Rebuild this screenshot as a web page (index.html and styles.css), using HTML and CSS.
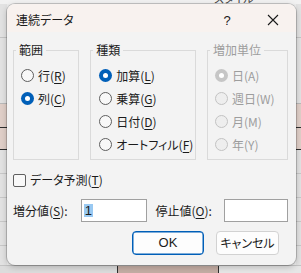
FILE: index.html
```html
<!DOCTYPE html>
<html lang="ja">
<head>
<meta charset="utf-8">
<title>連続データ</title>
<link rel="stylesheet" href="styles.css">
</head>
<body>
<div class="sheet">
  <div class="top"><span class="top-text">スタイル</span></div>
  <div class="left"></div>
  <div class="mid"></div>
  <div class="right"></div>
  <div class="bottom"><div class="b1"></div><div class="b2"></div><div class="b3"></div></div>
</div>

<div class="dialog">
  <div class="titlebar">
    <span class="title">連続データ</span>
    <span class="tb-btn help">?</span>
    <span class="tb-btn close">
      <svg width="12" height="12" viewBox="0 0 12 12"><path d="M1 1 L11 11 M11 1 L1 11" stroke="#1a1a1a" stroke-width="1.1" fill="none"/></svg>
    </span>
  </div>
  <div class="content">
    <div class="groups">
      <fieldset class="group g1">
        <legend>範囲</legend>
        <div class="opt"><span class="radio"></span><span>行(<u>R</u>)</span></div>
        <div class="opt"><span class="radio on"></span><span>列(<u>C</u>)</span></div>
      </fieldset>
      <fieldset class="group g2">
        <legend>種類</legend>
        <div class="opt"><span class="radio on"></span><span>加算(<u>L</u>)</span></div>
        <div class="opt"><span class="radio"></span><span>乗算(<u>G</u>)</span></div>
        <div class="opt"><span class="radio"></span><span>日付(<u>D</u>)</span></div>
        <div class="opt"><span class="radio"></span><span>オートフィル(<u>F</u>)</span></div>
      </fieldset>
      <fieldset class="group g3 disabled">
        <legend>増加単位</legend>
        <div class="opt"><span class="radio on"></span><span>日(A)</span></div>
        <div class="opt"><span class="radio"></span><span>週日(W)</span></div>
        <div class="opt"><span class="radio"></span><span>月(M)</span></div>
        <div class="opt"><span class="radio"></span><span>年(Y)</span></div>
      </fieldset>
    </div>
    <div class="check-row"><span class="checkbox"></span><span>データ予測(<u>T</u>)</span></div>
    <div class="values">
      <span class="vlabel l1">増分値(<u>S</u>):</span>
      <span class="input i1"><span class="sel">1</span></span>
      <span class="vlabel l2">停止値(<u>O</u>):</span>
      <span class="input i2"></span>
    </div>
    <div class="buttons">
      <span class="btn ok">OK</span>
      <span class="btn cancel">キャンセル</span>
    </div>
  </div>
</div>
</body>
</html>
```

FILE: styles.css
```css
* { box-sizing: border-box; }
html, body { margin: 0; padding: 0; }
body {
  width: 301px;
  height: 273px;
  overflow: hidden;
  position: relative;
  font-family: "Noto Sans CJK JP", "Noto Sans", sans-serif;
  font-size: 12px;
  font-feature-settings: "palt";
  color: #1b1b1b;
  background: #ececec;
}

/* background spreadsheet */
.sheet {
  display: grid;
  grid-template-columns: 7px 1fr 5px;
  grid-template-rows: 4px 261px 8px;
  width: 301px;
  height: 273px;
}
.top {
  grid-column: 1 / 4;
  background: #f1f1f1;
  overflow: hidden;
  padding-left: 214px;
}
.top-text {
  display: block;
  margin-top: -8px;
  line-height: 12px;
  font-size: 11px;
  color: #444;
}
.left, .right {
  background:
    linear-gradient(#c4c4c4, #c4c4c4) 0 33px / 100% 1px no-repeat,
    linear-gradient(#b9b9b9, #b9b9b9) 0 99px / 100% 1px no-repeat,
    linear-gradient(#2e2e2e, #2e2e2e) 0 123px / 100% 1px no-repeat,
    linear-gradient(#2e2e2e, #2e2e2e) 0 145px / 100% 1px no-repeat,
    linear-gradient(#c8c8c8, #c8c8c8) 0 169px / 100% 1px no-repeat,
    linear-gradient(#c8c8c8, #c8c8c8) 0 193px / 100% 1px no-repeat,
    linear-gradient(#c8c8c8, #c8c8c8) 0 217px / 100% 1px no-repeat,
    linear-gradient(#c8c8c8, #c8c8c8) 0 241px / 100% 1px no-repeat,
    linear-gradient(#e0cfc8, #e0cfc8) 0 100px / 100% 45px no-repeat,
    #e2e2e2;
}
.mid { background: #ececec; }
.bottom {
  grid-column: 1 / 4;
  display: flex;
  border-top: 1px solid #c4c4c4;
}
.b1 { width: 118px; background: #dcdcdc; border-right: 1px solid #2e2e2e; }
.b2 { width: 101px; background: #c4ada4; border-right: 1px solid #2e2e2e; }
.b3 { flex: 1; background: #e6e6e6; }

/* dialog window */
.dialog {
  position: absolute;
  left: 7px;
  top: 4px;
  width: 289px;
  height: 261px;
  border-radius: 8px;
  overflow: hidden;
  background: #f3f3f3;
  box-shadow: 0 0 0 1px rgba(0,0,0,0.18), 0 2px 6px rgba(0,0,0,0.22);
}
.titlebar {
  height: 28px;
  display: flex;
  align-items: center;
  background: #f8f2ef;
}
.title {
  flex: 1;
  padding-left: 9px;
  line-height: 16px;
  padding-top: 4px;
}
.tb-btn {
  width: 46px;
  height: 28px;
  display: flex;
  align-items: center;
  justify-content: center;
  padding-top: 4px;
}
.help { font-size: 13px; font-family: "Liberation Sans", sans-serif; }

.content {
  padding: 11px 8px 0 6px;
}
.groups {
  display: flex;
  gap: 11px;
}
.group {
  margin: 0;
  padding: 7px 0 0 0;
  border: 1px solid #dadada;
  min-width: 0;
  height: 117px;
  display: flex;
  flex-direction: column;
}
.group legend {
  margin-left: 2px;
  padding: 0 3px;
  line-height: 14px;
  font-size: 12px;
}
.g1 { width: 67px; }
.g2 { width: 107px; }
.g3 { width: 82px; }
.opt {
  height: 23px;
  display: flex;
  align-items: center;
  gap: 4px;
  padding-left: 7px;
  line-height: 16px;
  white-space: nowrap;
}
.g2 .opt { padding-left: 8px; }
u { text-decoration-thickness: 1px; text-underline-offset: 2px; }

.radio {
  width: 13px;
  height: 13px;
  flex: none;
  border-radius: 50%;
  border: 1px solid #5e5e5e;
  background: #f8f8f8;
  position: relative;
}
.radio.on {
  border: none;
  background: #005fb8;
}
.radio.on::after {
  content: "";
  position: absolute;
  left: 4px;
  top: 4px;
  width: 5px;
  height: 5px;
  border-radius: 50%;
  background: #fff;
}
.disabled legend, .disabled .opt { color: #9d9d9d; }
.disabled .radio { border-color: #c3c3c3; background: #eeeeee; }
.disabled .radio.on { background: #c6c6c6; }

.check-row {
  margin-top: 10px;
  height: 20px;
  display: flex;
  align-items: center;
  gap: 4px;
  line-height: 16px;
}
.checkbox {
  width: 13px;
  height: 13px;
  border: 1px solid #5e5e5e;
  border-radius: 2px;
  background: #f8f8f8;
}

.values {
  margin-top: 9px;
  display: flex;
  align-items: center;
  height: 23px;
  line-height: 16px;
}
.vlabel { white-space: nowrap; }
.l1 { width: 68px; }
.l2 { width: 69px; margin-left: 9px; }
.input {
  height: 23px;
  background: #fff;
  border: 1px solid #a0a0a0;
  display: flex;
  align-items: center;
  padding-left: 2px;
}
.i1 { width: 66px; }
.i2 { width: 64px; }
.sel {
  background: #99c9f2;
  line-height: 13px;
  height: 13px;
  padding: 0 1px;
  font-family: "Liberation Sans", sans-serif;
  font-size: 13px;
}

.buttons {
  margin-top: 9px;
  display: flex;
  justify-content: flex-end;
  gap: 12px;
  padding-right: 9px;
}
.btn {
  height: 24px;
  display: flex;
  align-items: center;
  justify-content: center;
  background: #fdfdfd;
  border: 1px solid #d2d2d2;
  border-radius: 4px;
  line-height: 16px;
}
.ok {
  width: 72px;
  border-color: #005fb8;
  box-shadow: inset 0 0 0 0.5px #005fb8;
  font-family: "Liberation Sans", sans-serif;
  font-size: 13px;
}
.cancel { width: 63px; }
```
